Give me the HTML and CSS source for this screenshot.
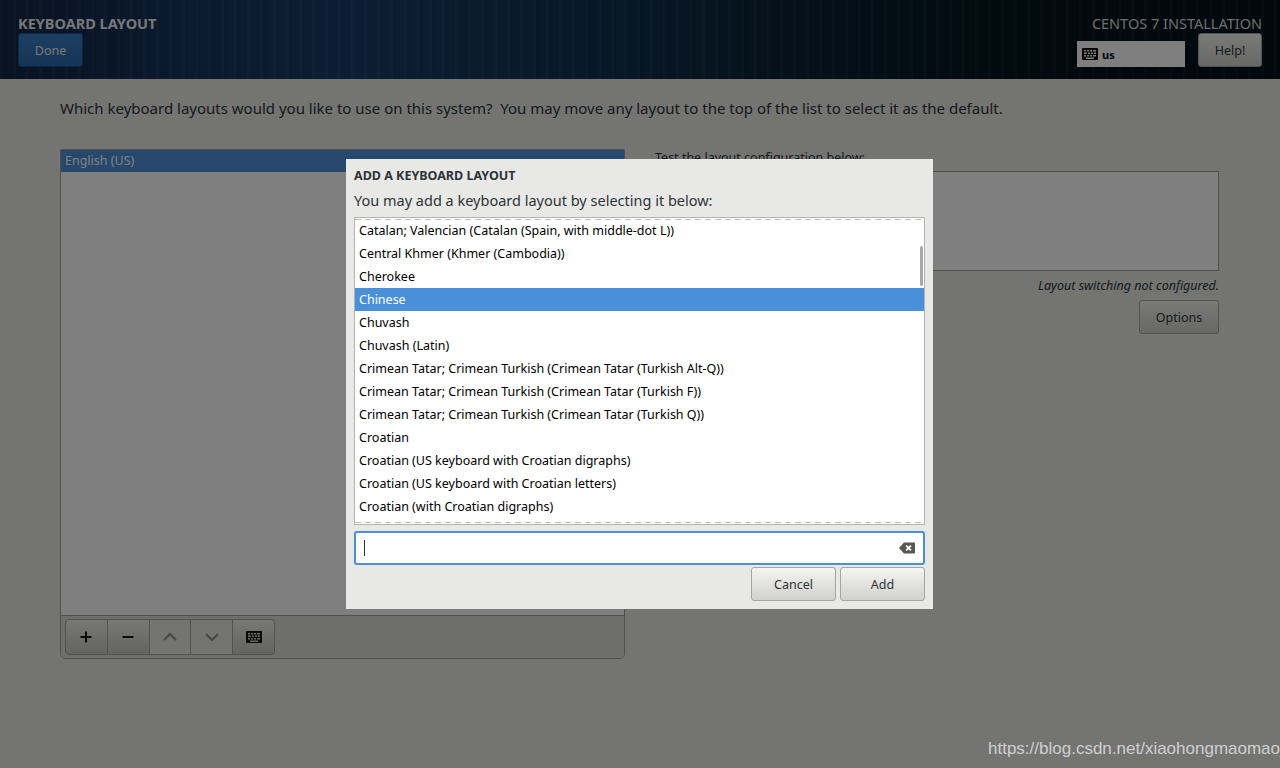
FILE: index.html
```html
<!DOCTYPE html>
<html lang="en">
<head>
<meta charset="utf-8">
<title>Keyboard Layout</title>
<link rel="stylesheet" href="styles.css">
</head>
<body>
<svg class="defs" width="0" height="0" aria-hidden="true">
  <symbol id="kbd" viewBox="0 0 16 12">
    <path fill-rule="evenodd" d="M1 0h14a1 1 0 0 1 1 1v10a1 1 0 0 1-1 1H1a1 1 0 0 1-1-1V1a1 1 0 0 1 1-1zM2 2v1.5h2V2zM5 2v1.500h2V2zM8 2v1.500h2V2zM11 2v1.500h3V2zM2 4.500V6h3V4.500zM6 4.500V6h2V4.500zM9 4.500V6h2V4.500zM12 4.500V6h2V4.500zM2 7v1.500h2V7zM5 7v1.500h2V7zM8 7v1.500h2V7zM11 7v1.500h3V7zM4 9.500V11h8V9.500z"/>
  </symbol>
</svg>
<div class="page">
  <header class="topbar">
    <div class="top-left">
      <h1 class="spoke-title">KEYBOARD LAYOUT</h1>
      <button class="btn btn-blue">Done</button>
    </div>
    <div class="top-right">
      <div class="distro">CENTOS 7 INSTALLATION</div>
      <div class="top-row">
        <div class="layout-ind"><svg class="kbd-small"><use href="#kbd"/></svg><span>us</span></div>
        <button class="btn btn-help">Help!</button>
      </div>
    </div>
  </header>
  <main class="content">
    <p class="intro">Which keyboard layouts would you like to use on this system?&nbsp; You may move any layout to the top of the list to select it as the default.</p>
    <div class="columns">
      <section class="layout-panel">
        <div class="layout-list"><div class="layout-row">English (US)</div></div>
        <div class="toolbar">
          <div class="tool-group">
            <button class="tool"><svg width="14" height="14" viewBox="0 0 14 14"><path class="ic-strong" d="M7 1.500v11M1.500 7h11"/></svg></button>
            <button class="tool"><svg width="14" height="14" viewBox="0 0 14 14"><path class="ic-strong" d="M1.500 7h11"/></svg></button>
            <button class="tool tool-off"><svg width="14" height="10" viewBox="0 0 14 10"><path class="ic-soft" d="M1 8l6-6 6 6"/></svg></button>
            <button class="tool tool-off"><svg width="14" height="10" viewBox="0 0 14 10"><path class="ic-soft" d="M1 2l6 6 6-6"/></svg></button>
            <button class="tool"><svg class="kbd-tool"><use href="#kbd"/></svg></button>
          </div>
        </div>
      </section>
      <section class="test-panel">
        <div class="test-label">Test the layout configuration below:</div>
        <div class="test-area"></div>
        <div class="switch-note">Layout switching not configured.</div>
        <div class="options-row"><button class="btn btn-options">Options</button></div>
      </section>
    </div>
  </main>
</div>
<div class="dim"></div>
<div class="dialog">
  <h2 class="dlg-title">ADD A KEYBOARD LAYOUT</h2>
  <p class="dlg-sub">You may add a keyboard layout by selecting it below:</p>
  <div class="dlg-list">
    <div class="item">Catalan; Valencian (Catalan (Spain, with middle-dot L))</div>
    <div class="item">Central Khmer (Khmer (Cambodia))</div>
    <div class="item">Cherokee</div>
    <div class="item item-sel">Chinese</div>
    <div class="item">Chuvash</div>
    <div class="item">Chuvash (Latin)</div>
    <div class="item">Crimean Tatar; Crimean Turkish (Crimean Tatar (Turkish Alt-Q))</div>
    <div class="item">Crimean Tatar; Crimean Turkish (Crimean Tatar (Turkish F))</div>
    <div class="item">Crimean Tatar; Crimean Turkish (Crimean Tatar (Turkish Q))</div>
    <div class="item">Croatian</div>
    <div class="item">Croatian (US keyboard with Croatian digraphs)</div>
    <div class="item">Croatian (US keyboard with Croatian letters)</div>
    <div class="item">Croatian (with Croatian digraphs)</div>
    <div class="scroll-thumb"></div>
  </div>
  <div class="entry">
    <span class="caret"></span>
    <svg class="clear-ic" width="16" height="12" viewBox="0 0 16 12"><path fill-rule="evenodd" fill="#555753" d="M5 0.500h10a1 1 0 0 1 1 1v9a1 1 0 0 1-1 1H5L0 6zM7.800 3L6.600 4.200 8.400 6 6.600 7.800 7.800 9 9.600 7.200 11.400 9 12.600 7.800 10.800 6 12.600 4.200 11.400 3 9.600 4.800z"/></svg>
  </div>
  <div class="dlg-actions">
    <button class="btn btn-cancel">Cancel</button>
    <button class="btn btn-add">Add</button>
  </div>
</div>
<div class="watermark">https://blog.csdn.net/xiaohongmaomao_</div>
</body>
</html>
```
FILE: styles.css
```css
* { box-sizing: border-box; }
html, body { margin: 0; height: 100%; }
body {
  width: 1280px;
  height: 768px;
  overflow: hidden;
  position: relative;
  background: #e8e8e7;
  color: #2e3436;
  font-family: "Noto Sans", "Open Sans", sans-serif;
}
.defs { position: absolute; }
.page { height: 768px; }

.topbar {
  height: 79px;
  display: flex;
  justify-content: space-between;
  padding: 0 18px;
  background:
    repeating-linear-gradient(90deg, rgba(255,255,255,.035) 0 3px, rgba(0,0,0,.03) 3px 7px, rgba(255,255,255,0) 7px 13px),
    linear-gradient(90deg, #102545 0, #16325c 12%, #1a3c68 28%, #12304f 48%, #06202f 65%, #03141d 80%, #02121b 100%);
}
.spoke-title {
  margin: 14px 0 0;
  font-size: 14.500px;
  line-height: 19px;
  font-weight: 700;
  color: #eeeeec;
}
.btn {
  font-family: inherit;
  font-size: 12.500px;
  border-radius: 3px;
  padding: 0;
  height: 34px;
  cursor: default;
  color: #2e3436;
  border: 1px solid #a5a5a1;
  background: linear-gradient(#f4f4f3, #d0d0cc);
}
.btn-blue {
  margin-top: 0;
  width: 65px;
  color: #eeeeec;
  border-color: #1a4f85;
  background: linear-gradient(#3a7fc4, #2a69ac);
}
.top-right { width: 185px; display: flex; flex-direction: column; align-items: flex-end; }
.distro {
  margin-top: 14px;
  font-size: 14.500px;
  line-height: 19px;
  color: #dcdcdc;
  white-space: nowrap;
}
.top-row { display: flex; align-items: flex-end; margin-top: 0; }
.layout-ind {
  width: 108px;
  height: 26px;
  margin: 8px 13px 0 0;
  padding-left: 5px;
  display: flex;
  align-items: center;
  gap: 4px;
  background: #fff;
  color: #000;
  font-size: 11px;
  font-weight: 700;
}
.kbd-small { width: 16px; height: 12px; fill: #000; }
.btn-help { width: 64px; }

.content { padding: 0 61px 0 60px; }
.intro {
  margin: 19px 0 0;
  font-size: 15px;
  line-height: 20px;
  white-space: nowrap;
}
.columns { display: grid; grid-template-columns: 565px 564px; gap: 30px; margin-top: 31px; }
.layout-panel {
  height: 510px;
  display: flex;
  flex-direction: column;
  border: 1px solid #a1a19d;
  border-radius: 0 0 5px 5px;
  background: #fff;
}
.layout-list { flex: 1; }
.layout-row {
  height: 22px;
  padding-left: 4px;
  background: #4a90d9;
  color: #fff;
  font-size: 12.500px;
  line-height: 22px;
}
.toolbar {
  height: 43px;
  padding: 3px 4px;
  background: #dcdcda;
  border-top: 1px solid #a1a19d;
  border-radius: 0 0 4px 4px;
}
.tool-group { display: flex; width: 210px; }
.tool {
  flex: 1;
  height: 36px;
  padding: 0;
  display: flex;
  align-items: center;
  justify-content: center;
  border: 1px solid #a5a5a1;
  border-left-width: 0;
  background: linear-gradient(#efefee, #c9c9c6);
}
.tool:first-child { border-left-width: 1px; border-radius: 4px 0 0 4px; }
.tool:last-child { border-radius: 0 4px 4px 0; }
.tool-off { background: #e8e8e7; }
.ic-strong { fill: none; stroke: #111; stroke-width: 2; }
.ic-soft { fill: none; stroke: #8f908d; stroke-width: 2; }
.kbd-tool { width: 16px; height: 12px; fill: #111; }

.test-panel { display: flex; flex-direction: column; }
.test-label { font-size: 12.500px; line-height: 17px; margin-top: 0; }
.test-area { height: 100px; margin-top: 5px; border: 1px solid #a1a19d; background: #fff; }
.switch-note {
  margin-top: 6px;
  text-align: right;
  font-size: 12.500px;
  line-height: 18px;
  font-style: italic;
}
.options-row { display: flex; justify-content: flex-end; margin-top: 5px; }
.btn-options { width: 80px; }

.dim { position: absolute; inset: 0; background: rgba(0,0,0,.5); }

.dialog {
  position: absolute;
  left: 346px;
  top: 159px;
  width: 587px;
  height: 450px;
  padding: 8px;
  display: flex;
  flex-direction: column;
  background: #e8e8e7;
}
.dlg-title { margin: 0; font-size: 12.500px; line-height: 17px; font-weight: 700; color: #2e3436; }
.dlg-sub { margin: 6px 0 0; font-size: 14.500px; line-height: 20px; color: #2e3436; }
.dlg-list {
  position: relative;
  height: 308px;
  margin-top: 7px;
  padding-top: 1px;
  border: 1px solid #b3b3af;
  background: #fff;
}
.dlg-list::before, .dlg-list::after {
  content: "";
  position: absolute;
  left: 0;
  right: 0;
  height: 1px;
  background: repeating-linear-gradient(90deg, #c0c0c0 0 6px, transparent 6px 10px);
}
.dlg-list::before { top: 1px; }
.dlg-list::after { bottom: 1px; }
.item {
  height: 23px;
  padding-left: 4px;
  font-size: 12.500px;
  line-height: 23px;
  color: #000;
  white-space: nowrap;
}
.item-sel { background: #4a90d9; color: #fff; }
.scroll-thumb {
  position: absolute;
  right: 1px;
  top: 28px;
  width: 3px;
  height: 40px;
  border-radius: 2px;
  background: #a9a9a9;
}
.entry {
  height: 34px;
  margin-top: 6px;
  display: flex;
  align-items: center;
  justify-content: space-between;
  padding: 0 8px;
  background: #fff;
  border: 2px solid #4a90d9;
  border-radius: 3px;
}
.caret { width: 1px; height: 16px; background: #2e3436; }
.dlg-actions { display: flex; justify-content: flex-end; gap: 4px; margin-top: 2px; }
.btn-cancel { width: 85px; }
.btn-add { width: 85px; }

.watermark {
  position: absolute;
  left: 988px;
  top: 739px;
  font-family: "Liberation Sans", Arial, sans-serif;
  font-size: 17px;
  line-height: 20px;
  color: #cfcfcf;
  white-space: nowrap;
}
```
